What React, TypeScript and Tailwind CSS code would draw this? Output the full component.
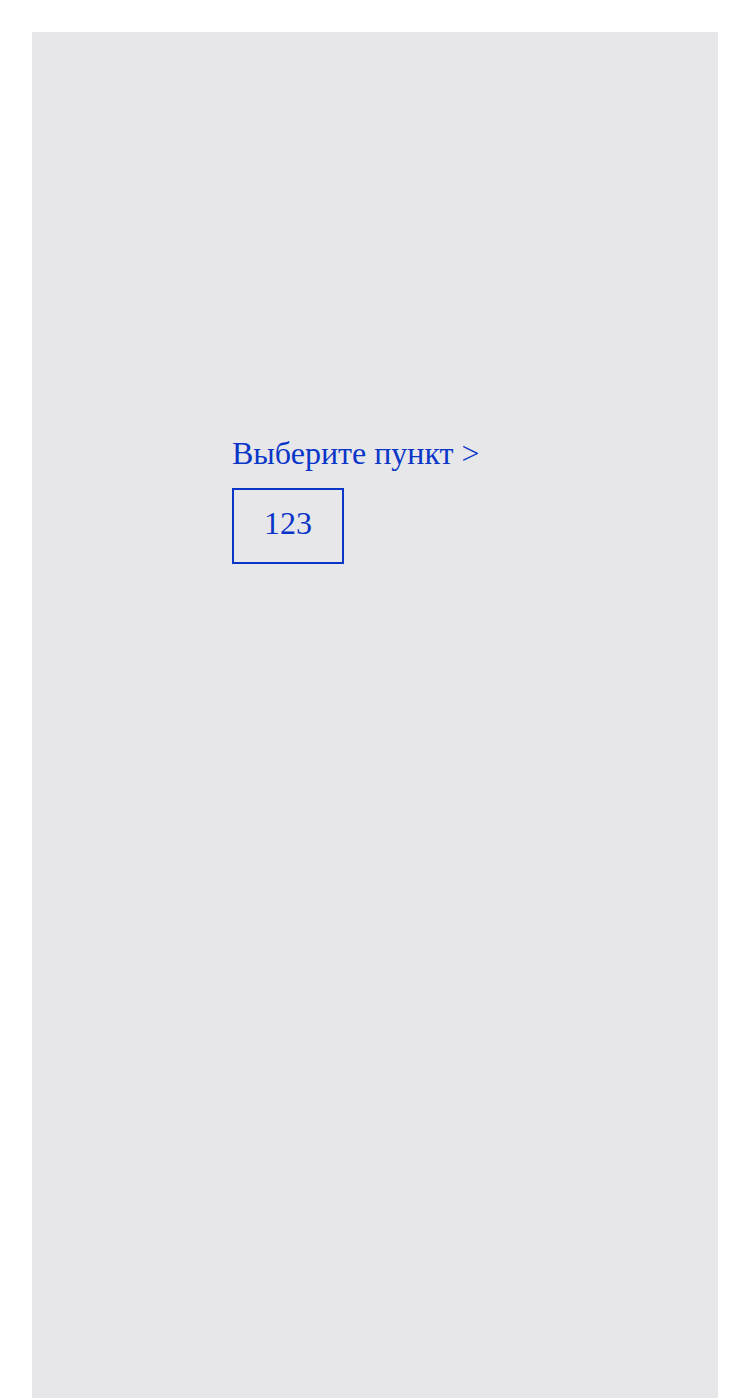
export default function App() {
  return (
    <div className="min-h-screen bg-white pt-8 px-8" style={{ fontFamily: '"Liberation Serif", serif' }}>
      <div className="min-h-[1366px] bg-[#e7e7ea] pl-[200px] pt-[401px]">
        <div className="text-[32px] leading-10 text-[#0a36c8]">Выберите пункт &gt;</div>
        <div className="mt-[15px] inline-block border-2 border-[#0a36c8] px-[30px] pt-[13px] pb-[19px] text-[32px] leading-10 text-[#0a36c8]">
          123
        </div>
      </div>
    </div>
  )
}
